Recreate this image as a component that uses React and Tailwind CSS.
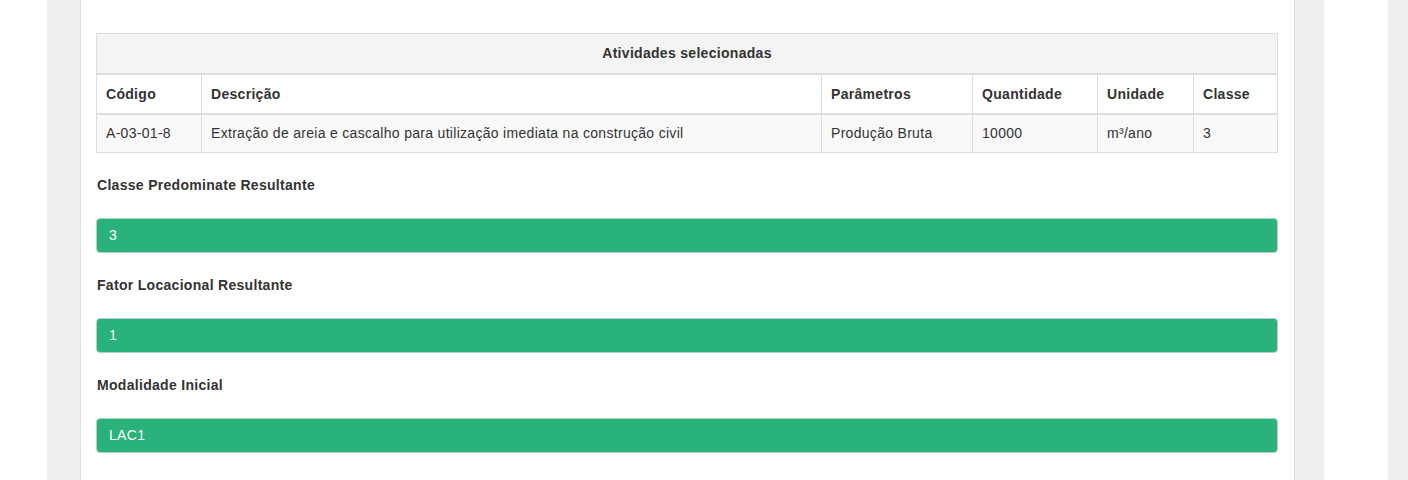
const columns = [
  { label: 'Código', width: 'w-[105px]' },
  { label: 'Descrição', width: 'w-[620px]' },
  { label: 'Parâmetros', width: 'w-[151px]' },
  { label: 'Quantidade', width: 'w-[125px]' },
  { label: 'Unidade', width: 'w-[96px]' },
  { label: 'Classe', width: 'w-[84px]' },
]

const rows = [
  ['A-03-01-8', 'Extração de areia e cascalho para utilização imediata na construção civil', 'Produção Bruta', '10000', 'm³/ano', '3'],
]

const results = [
  { label: 'Classe Predominate Resultante', value: '3' },
  { label: 'Fator Locacional Resultante', value: '1' },
  { label: 'Modalidade Inicial', value: 'LAC1' },
]

function ResultField({ label, value }) {
  return (
    <div>
      <div className="mt-[23px] h-[18px] text-[14px] font-bold leading-[18px] pl-px">{label}</div>
      <div className="mt-[24px] h-[35px] rounded-[4px] border border-[#b9cfc4] bg-[#2ab27b] px-3 text-[14px] leading-[33px] text-white">
        {value}
      </div>
    </div>
  )
}

export default function App() {
  return (
    <div className="flex h-[480px] w-[1408px] overflow-hidden bg-white text-[#333] tracking-[0.3px]" style={{ fontFamily: '"Liberation Sans", Arial, sans-serif' }}>
      <div className="w-[47px] shrink-0 bg-white" />
      <div className="flex w-[1277px] shrink-0 bg-[#eeeeee] pl-[33px] pr-[32px]">
        <div className="flex-1 border-x border-[#e0e0e0] bg-white pl-[15px] pr-[16px] pt-[33px]">
          <table className="w-full table-fixed border-collapse text-[14px] leading-[18px]">
            <colgroup>
              {columns.map((c) => (
                <col key={c.label} className={c.width} />
              ))}
            </colgroup>
            <thead>
              <tr>
                <th colSpan={6} className="h-[40px] border border-b-2 border-[#dddddd] bg-[#f4f4f4] text-center font-bold">
                  Atividades selecionadas
                </th>
              </tr>
              <tr>
                {columns.map((c) => (
                  <th key={c.label} className="h-[40px] border border-b-2 border-[#dddddd] bg-white pl-[9px] pr-2 text-left font-bold">
                    {c.label}
                  </th>
                ))}
              </tr>
            </thead>
            <tbody>
              {rows.map((r, i) => (
                <tr key={i} className="bg-[#f9f9f9]">
                  {r.map((cell, j) => (
                    <td key={j} className="h-[39px] border border-[#dddddd] pl-[9px] pr-2 whitespace-nowrap">
                      {cell}
                    </td>
                  ))}
                </tr>
              ))}
            </tbody>
          </table>

          {results.map((r) => (
            <ResultField key={r.label} label={r.label} value={r.value} />
          ))}
        </div>
      </div>
      <div className="w-[64px] shrink-0 bg-white" />
      <div className="flex-1 bg-[#eeeeee]" />
    </div>
  )
}
